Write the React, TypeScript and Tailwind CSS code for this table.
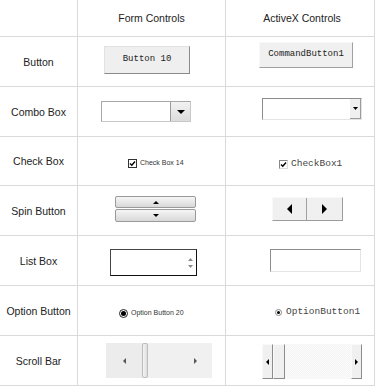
const mono = "font-['Liberation_Mono',monospace]"
const sans = "font-['Liberation_Sans',Arial,sans-serif]"

function Tri({ dir, w, h, color = "#000" }: { dir: "up" | "down" | "left" | "right"; w: number; h: number; color?: string }) {
  const pts =
    dir === "up"
      ? `0,${h} ${w},${h} ${w / 2},0`
      : dir === "down"
        ? `0,0 ${w},0 ${w / 2},${h}`
        : dir === "left"
          ? `${w},0 ${w},${h} 0,${h / 2}`
          : `0,0 0,${h} ${w},${h / 2}`
  return (
    <svg width={w} height={h} viewBox={`0 0 ${w} ${h}`}>
      <polygon points={pts} fill={color} />
    </svg>
  )
}

function Label({ children }: { children: React.ReactNode }) {
  return (
    <div className={`flex items-center justify-center pt-[2px] border-r border-[#dadada] text-[10.5px] text-[#222] ${sans}`}>
      {children}
    </div>
  )
}

function Cell({ children, className = "" }: { children: React.ReactNode; className?: string }) {
  return <div className={`flex items-start border-r border-[#dadada] ${className}`}>{children}</div>
}

export default function App() {
  return (
    <div className="w-[376px] h-[386px] bg-white overflow-hidden">
      <div className="grid grid-cols-[78px_148px_149px] grid-rows-[37px_50px_50px_49px_50px_50px_50px_50px]">
        {/* header */}
        <div className="border-r border-b border-[#dadada]" />
        <div className={`flex items-center justify-center pt-[2px] border-r border-b border-[#dadada] text-[10.5px] text-[#222] ${sans}`}>
          Form Controls
        </div>
        <div className={`flex items-center justify-center pt-[2px] border-r border-b border-[#dadada] text-[10.5px] text-[#222] pl-[4px] ${sans}`}>
          ActiveX Controls
        </div>

        {/* Button */}
        <div className="contents [&>div]:border-b">
          <Label>Button</Label>
          <Cell className="pl-[26px] pt-[9px]">
            <div className={`w-[86px] h-[28px] bg-[#efefef] border border-[#e2e2e2] border-r-[#8a8a8a] border-b-[#8a8a8a] flex items-center justify-center text-[9px] text-[#222] ${mono}`}>
              Button 10
            </div>
          </Cell>
          <Cell className="pl-[33px] pt-[5px]">
            <div className={`w-[94px] h-[26px] bg-[#f0f0f0] border border-[#f8f8f8] border-r-[#a0a0a0] border-b-[#a0a0a0] flex items-center justify-center text-[9px] text-[#222] ${mono}`}>
              CommandButton1
            </div>
          </Cell>
        </div>

        {/* Combo Box */}
        <div className="contents [&>div]:border-b">
          <Label>Combo Box</Label>
          <Cell className="pl-[23px] pt-[14px]">
            <div className="w-[90px] h-[21px] bg-white border border-[#c8c8c8] border-t-[#a8a8a8] border-l-[#a8a8a8] flex justify-end">
              <div className="w-[20px] h-full bg-gradient-to-b from-[#f2f2f2] to-[#dcdcdc] border-l border-[#9a9a9a] flex items-center justify-center">
                <Tri dir="down" w={8} h={4} />
              </div>
            </div>
          </Cell>
          <Cell className="pl-[36px] pt-[11px]">
            <div className="w-[100px] h-[22px] bg-white border border-[#e4e4e4] border-t-[#8c8c8c] border-l-[#8c8c8c] flex justify-end">
              <div className="w-[11px] h-full bg-[#f0f0f0] border-r border-b border-[#9c9c9c] flex items-center justify-center">
                <Tri dir="down" w={5} h={3} />
              </div>
            </div>
          </Cell>
        </div>

        {/* Check Box */}
        <div className="contents [&>div]:border-b">
          <Label>Check Box</Label>
          <Cell className="pl-[50px] pt-[21px]">
            <div className="flex items-center gap-[3px]">
              <div className="w-[9px] h-[9px] border border-[#333] bg-white flex items-center justify-center">
                <svg width="7" height="7" viewBox="0 0 7 7">
                  <path d="M1 3.5 L2.8 5.3 L6 1.5" stroke="#000" strokeWidth="1.4" fill="none" />
                </svg>
              </div>
              <span className={`text-[7px] text-[#333] ${sans}`}>Check Box 14</span>
            </div>
          </Cell>
          <Cell className="pl-[53px] pt-[20px]">
            <div className="flex items-center gap-[3px]">
              <div className="w-[9px] h-[9px] border border-[#888] border-r-[#ddd] border-b-[#ddd] bg-white flex items-center justify-center">
                <svg width="7" height="7" viewBox="0 0 7 7">
                  <path d="M1 3.5 L2.8 5.3 L6 1.5" stroke="#000" strokeWidth="1.4" fill="none" />
                </svg>
              </div>
              <span className={`text-[9.5px] text-[#444] ${mono}`}>CheckBox1</span>
            </div>
          </Cell>
        </div>

        {/* Spin Button */}
        <div className="contents [&>div]:border-b">
          <Label>Spin Button</Label>
          <Cell className="pl-[37px] pt-[10px]">
            <div className="w-[81px] flex flex-col gap-[1px]">
              <div className="h-[12px] rounded-[2px] border border-[#9a9a9a] bg-gradient-to-b from-[#f6f6f6] to-[#d8d8d8] flex items-center justify-center">
                <Tri dir="up" w={6} h={3} />
              </div>
              <div className="h-[13px] rounded-[2px] border border-[#9a9a9a] bg-gradient-to-b from-[#f6f6f6] to-[#d8d8d8] flex items-center justify-center">
                <Tri dir="down" w={6} h={3} />
              </div>
            </div>
          </Cell>
          <Cell className="pl-[46px] pt-[11px]">
            <div className="w-[71px] h-[24px] bg-[#f0f0f0] border border-[#f8f8f8] border-r-[#9c9c9c] border-b-[#9c9c9c] flex">
              <div className="w-[34px] h-full border-r border-[#a0a0a0] flex items-center justify-center">
                <Tri dir="left" w={5} h={10} />
              </div>
              <div className="flex-1 flex items-center justify-center">
                <Tri dir="right" w={5} h={10} />
              </div>
            </div>
          </Cell>
        </div>

        {/* List Box */}
        <div className="contents [&>div]:border-b">
          <Label>List Box</Label>
          <Cell className="pl-[32px] pt-[13px]">
            <div className="w-[87px] h-[27px] bg-white border border-[#444] border-r-[#111] border-b-[#111] flex justify-end">
              <div className="w-[12px] h-full flex flex-col items-center justify-center gap-[4px]">
                <Tri dir="up" w={5} h={3} color="#8a8a8a" />
                <Tri dir="down" w={5} h={3} color="#8a8a8a" />
              </div>
            </div>
          </Cell>
          <Cell className="pl-[44px] pt-[13px]">
            <div className="w-[91px] h-[23px] bg-white border border-[#e4e4e4] border-t-[#8c8c8c] border-l-[#8c8c8c]" />
          </Cell>
        </div>

        {/* Option Button */}
        <div className="contents [&>div]:border-b">
          <Label>Option Button</Label>
          <Cell className="pl-[41px] pt-[22px]">
            <div className="flex items-center gap-[3px]">
              <div className="w-[9px] h-[9px] rounded-full border border-[#222] bg-white flex items-center justify-center">
                <div className="w-[5px] h-[5px] rounded-full bg-black" />
              </div>
              <span className={`text-[7px] text-[#333] ${sans}`}>Option Button 20</span>
            </div>
          </Cell>
          <Cell className="pl-[49px] pt-[19px]">
            <div className="flex items-center gap-[4px]">
              <div className="w-[7px] h-[7px] rounded-full border border-[#888] bg-white flex items-center justify-center">
                <div className="w-[3px] h-[3px] rounded-full bg-black" />
              </div>
              <span className={`text-[9.5px] text-[#444] ${mono}`}>OptionButton1</span>
            </div>
          </Cell>
        </div>

        {/* Scroll Bar */}
        <div className="contents [&>div]:border-b">
          <Label>Scroll Bar</Label>
          <Cell className="pl-[28px] pt-[7px]">
            <div className="w-[106px] h-[35px] bg-[#ececec] flex items-center">
              <div className="w-[36px] h-full flex items-center justify-center">
                <Tri dir="left" w={3} h={6} color="#555" />
              </div>
              <div className="w-[6px] h-full rounded-[2px] border border-[#bdbdbd] bg-gradient-to-r from-[#f4f4f4] to-[#dedede]" />
              <div className="flex-1 h-full bg-[#f0f0f0] flex items-center justify-end pr-[15px]">
                <Tri dir="right" w={3} h={6} color="#555" />
              </div>
            </div>
          </Cell>
          <Cell className="pl-[36px] pt-[8px]">
            <div className="w-[100px] h-[35px] flex bg-[repeating-conic-gradient(#f4f4f4_0%_25%,#fbfbfb_0%_50%)] bg-[length:2px_2px]">
              <div className="w-[11px] h-full bg-[#f0f0f0] border border-[#fafafa] border-r-[#8c8c8c] border-b-[#8c8c8c] flex items-center justify-center">
                <Tri dir="left" w={3} h={6} />
              </div>
              <div className="w-[12px] h-full bg-[#f0f0f0] border border-[#fafafa] border-r-[#8c8c8c] border-b-[#8c8c8c]" />
              <div className="flex-1" />
              <div className="w-[11px] h-full bg-[#f0f0f0] border border-[#fafafa] border-r-[#8c8c8c] border-b-[#8c8c8c] flex items-center justify-center">
                <Tri dir="right" w={3} h={6} />
              </div>
            </div>
          </Cell>
        </div>
      </div>
    </div>
  )
}
